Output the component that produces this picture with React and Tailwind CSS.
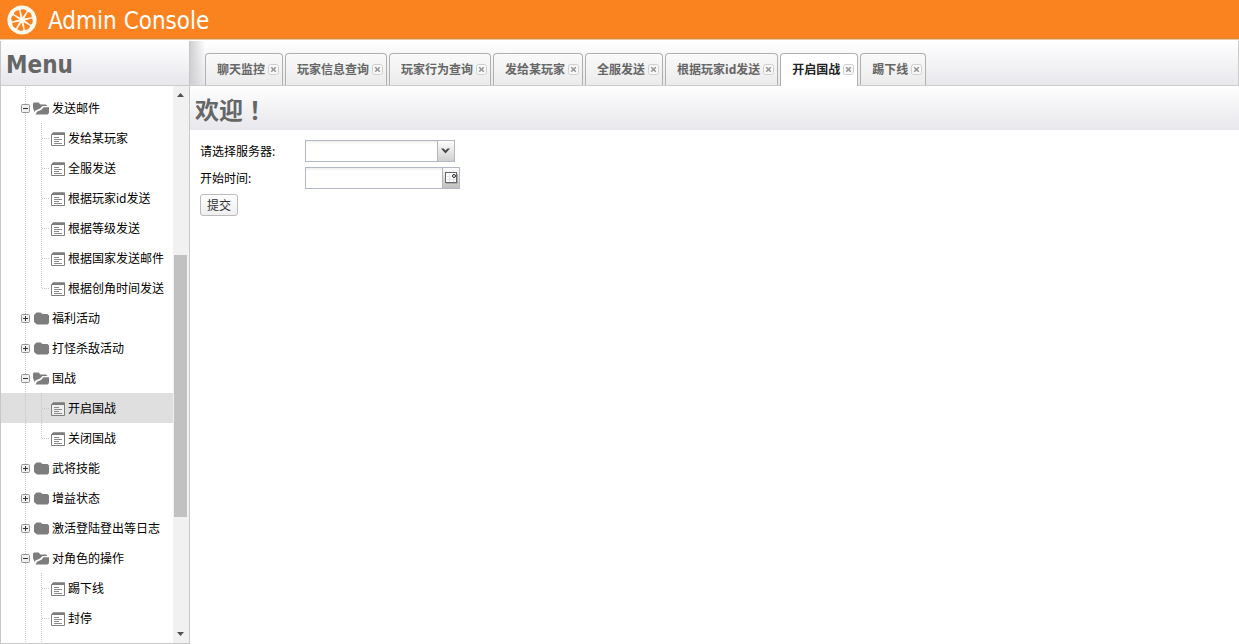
import React, { useState } from "react";

const TREE = [
  {
    label: "发送邮件",
    open: true,
    children: ["发给某玩家", "全服发送", "根据玩家id发送", "根据等级发送", "根据国家发送邮件", "根据创角时间发送"],
  },
  { label: "福利活动" },
  { label: "打怪杀敌活动" },
  { label: "国战", open: true, children: ["开启国战", "关闭国战"] },
  { label: "武将技能" },
  { label: "增益状态" },
  { label: "激活登陆登出等日志" },
  { label: "对角色的操作", open: true, more: true, children: ["踢下线", "封停"] },
];

const TABS = ["聊天监控", "玩家信息查询", "玩家行为查询", "发给某玩家", "全服发送", "根据玩家id发送", "开启国战", "踢下线"];

function OrangeLogo() {
  return (
    <svg width="30" height="30" viewBox="-15 -15 30 30" aria-hidden="true" className="shrink-0">
      <circle r="14.6" fill="#fffaf0" />
      <g fill="#fb831f">
        {[10, 55, 100, 145, 190, 235, 280, 325].map((a) => (
          <path key={a} d="M0 -2.8 L-3.2 -9.4 Q-3 -10.6 0 -10.9 Q3 -10.6 3.2 -9.4 Z" transform={`rotate(${a})`} />
        ))}
      </g>
    </svg>
  );
}

function Dots({ d }) {
  return <path d={d} stroke="#c8c8c8" strokeDasharray="1 1" fill="none" />;
}

function Toggle({ open }) {
  return (
    <svg width="9" height="30" viewBox="0 0 9 30" className="block" aria-hidden="true">
      <Dots d="M4.5 0V30" />
      <rect x="0.5" y="11.5" width="8" height="8" rx="1" fill="#f0f0f0" stroke="#959595" />
      <path d={open ? "M2 15.5H7" : "M2 15.5H7M4.5 13V18"} stroke="#333" />
    </svg>
  );
}

function Folder({ open }) {
  return (
    <svg width="16" height="13" viewBox="0 0 16 13" className="ml-[3px] block" aria-hidden="true">
      {open ? (
        <g fill="#7d7d7d">
          <path d="M1 .5H5.5L7.5 2.5H13L14.5 4H9.5L7 6.5L2.5 8.5L1.5 10L0 6V1.5Z" />
          <path d="M2.5 12.5L4 9.8L8.5 7.8L10.5 5.2H16V11L14.5 12.5Z" />
        </g>
      ) : (
        <path d="M3.5 .5H7.5L9.5 2H14.5L16 3.5V11L14.5 12.5H4L1 10V3Z" fill="#7d7d7d" />
      )}
    </svg>
  );
}

function PageIcon() {
  return (
    <svg width="14" height="16" viewBox="0 -2 14 16" className="block" aria-hidden="true">
      <path d="M2 1H13.5V13.5H.5V3Z" fill="#fff" fillOpacity=".5" stroke="#7d7d7d" />
      <path d="M2 .5H14V3H0Z" fill="#7d7d7d" />
      <path d="M3 5.5H8M3 7.5H11M3 9.5H8M3 11.5H11" stroke="#8a8a8a" />
    </svg>
  );
}

function NodeLabel({ children }) {
  return <span className="ml-[3px] pt-[2px] leading-[18px]">{children}</span>;
}

function Leaf({ label, last, selected, onSelect }) {
  return (
    <li>
      <button
        type="button"
        onClick={onSelect}
        className={"flex h-[30px] w-full items-center pl-5 text-left whitespace-nowrap " + (selected ? "bg-[#dfdfdf]" : "")}
      >
        <svg width="30" height="30" viewBox="0 0 30 30" className="block shrink-0" aria-hidden="true">
          <Dots d="M4.5 0V30" />
          <Dots d={last ? "M20.5 0V16" : "M20.5 0V30"} />
          <Dots d="M21 15.5H28" />
        </svg>
        <PageIcon />
        <NodeLabel>{label}</NodeLabel>
      </button>
    </li>
  );
}

function Branch({ node, selected, onSelect }) {
  const [open, setOpen] = useState(!!node.open);
  return (
    <li>
      <button
        type="button"
        aria-expanded={open}
        onClick={() => setOpen(!open)}
        className="flex h-[30px] w-full items-center pl-5 text-left whitespace-nowrap"
      >
        <Toggle open={open} />
        <Folder open={open} />
        <NodeLabel>{node.label}</NodeLabel>
      </button>
      {open && node.children && (
        <ul>
          {node.children.map((c, i) => (
            <Leaf
              key={c}
              label={c}
              last={!node.more && i === node.children.length - 1}
              selected={selected === node.label + c}
              onSelect={() => onSelect(node.label + c)}
            />
          ))}
        </ul>
      )}
    </li>
  );
}

function Sidebar() {
  const [selected, setSelected] = useState("国战开启国战");
  return (
    <aside className="flex w-[190px] shrink-0 flex-col border border-t-0 border-[#c8c8c8]">
      <h2 className="h-[45px] border-b border-[#cccccc] bg-linear-to-b from-white to-[#e7e7ec] pl-[5px] font-['DejaVu_Sans_Condensed','DejaVu_Sans',sans-serif] text-2xl leading-[48px] font-bold text-[#666666]">
        Menu
      </h2>
      <div className="flex min-h-0 grow">
        <nav aria-label="Menu" className="flex min-w-0 grow flex-col overflow-hidden">
          <svg width="29" height="7" viewBox="0 0 29 7" className="block shrink-0" aria-hidden="true">
            <Dots d="M24.5 1V7" />
          </svg>
          <ul>
            {TREE.map((n) => (
              <Branch key={n.label} node={n} selected={selected} onSelect={setSelected} />
            ))}
          </ul>
          <svg width="45" height="9" viewBox="0 0 45 9" className="block shrink-0" aria-hidden="true">
            <Dots d="M24.5 0V9" />
            <Dots d="M40.5 0V9" />
          </svg>
        </nav>
        <div className="flex w-4 flex-col items-center bg-[#f1f1f1] pr-px" aria-hidden="true">
          <svg width="7" height="18" viewBox="0 0 7 18">
            <path d="M0 11L3.5 7L7 11Z" fill="#505050" />
          </svg>
          <div className="grow-[151] basis-0" />
          <div className="w-[13px] grow-[262] basis-0 bg-[#c1c1c1]" />
          <div className="grow-[108] basis-0" />
          <svg width="7" height="18" viewBox="0 0 7 18">
            <path d="M0 7H7L3.5 11Z" fill="#505050" />
          </svg>
        </div>
      </div>
    </aside>
  );
}

function Tab({ label, active, onSelect }) {
  return (
    <li
      className={
        "flex shrink-0 items-center rounded-t-[4px] border border-b-0 border-[#b0b0b0] pr-[3px] pl-[11px] " +
        (active
          ? "h-[33px] bg-white pb-px text-[#222222]"
          : "h-8 bg-linear-to-b from-[#fafafa] to-[#ebebeb] text-[#666666]")
      }
    >
      <button type="button" role="tab" aria-selected={active} onClick={onSelect} className="font-bold whitespace-nowrap">
        {label}
      </button>
      <button type="button" aria-label={"关闭 " + label} className="ml-[3px]">
        <svg width="11" height="11" viewBox="0 0 11 11" className="block" aria-hidden="true">
          <rect x=".5" y=".5" width="10" height="10" rx="2" fill="#f8f8f8" stroke="#cfcfcf" />
          <path d="M3.2 3.2L7.8 7.8M7.8 3.2L3.2 7.8" stroke="#969696" strokeWidth="1.6" />
        </svg>
      </button>
    </li>
  );
}

function Content() {
  const [active, setActive] = useState("开启国战");
  return (
    <main className="flex min-w-0 grow flex-col">
      <div className="flex h-[45px] items-stretch bg-linear-to-b from-white to-[#e7e7ec]">
        <div className="w-[15px] shrink-0 border-b border-[#cccccc] bg-linear-to-r from-[#cfcfd2] to-transparent" />
        <ul role="tablist" className="flex gap-[2px] bg-[linear-gradient(#cccccc,#cccccc)] bg-[length:100%_1px] bg-bottom bg-no-repeat pt-3">
          {TABS.map((t) => (
            <Tab key={t} label={t} active={t === active} onSelect={() => setActive(t)} />
          ))}
        </ul>
        <div className="grow border-r border-b border-[#cccccc]" />
      </div>
      <h1 className="h-11 bg-linear-to-b from-white to-[#e7e7ec] pl-[5px] text-2xl leading-[46px] font-bold text-[#666666]">
        欢迎<span className="font-['Noto_Sans_CJK_TC',sans-serif]">！</span>
      </h1>
      <form className="flex flex-col items-start gap-[5px] px-[10px] pt-[10px]" onSubmit={(e) => e.preventDefault()}>
        <div className="flex items-center">
          <label htmlFor="server" className="w-[105px] pt-[2px]">
            请选择服务器:
          </label>
          <div className="flex h-[22px] w-[150px] border border-[#b3b8c4] bg-linear-to-b from-[#eeeeee] to-white to-15%">
            <select id="server" className="min-w-0 grow appearance-none bg-transparent px-1 outline-none">
              <option value=""></option>
            </select>
            <button
              type="button"
              aria-label="展开"
              className="flex w-[17px] shrink-0 items-center justify-center border-l border-[#b5b5b5] bg-linear-to-b from-[#fdfdfd] to-[#cfcfcf]"
            >
              <svg width="10" height="6" viewBox="0 0 10 6" aria-hidden="true">
                <path d="M0 .5H2.5L4.5 2.5L6.5 .5H9L4.5 5.5Z" fill="#444" />
              </svg>
            </button>
          </div>
        </div>
        <div className="flex items-center">
          <label htmlFor="start" className="w-[105px] pt-[2px]">
            开始时间:
          </label>
          <div className="flex h-[22px] w-[155px] border border-[#b3b8c4] bg-linear-to-b from-[#eeeeee] to-white to-15%">
            <input id="start" type="text" className="min-w-0 grow bg-transparent px-1 outline-none" />
            <button
              type="button"
              aria-label="选择日期"
              className="flex w-[17px] shrink-0 items-center justify-center border-l border-[#b5b5b5] bg-linear-to-b from-[#fdfdfd] to-[#bfbfbf]"
            >
              <svg width="13" height="12" viewBox="0 0 13 12" aria-hidden="true" className="mb-px shrink-0">
                <rect x=".5" y=".5" width="11" height="10" fill="#fff" stroke="#666" />
                <path d="M4.5 2V10M8.5 7V10M2 4.5H6M2 7.5H11" stroke="#e2e2e2" />
                <path d="M1 11.5H12.5V2" stroke="#aaa" fill="none" />
                <circle cx="9" cy="4" r="1.5" fill="#fff" stroke="#222" />
              </svg>
            </button>
          </div>
        </div>
        <button
          type="submit"
          className="h-[22px] rounded-[3px] border border-[#bbbbbb] bg-linear-to-b from-[#fefefe] to-[#efefef] px-[6px] pt-px leading-[20px] text-[#333333]"
        >
          提交
        </button>
      </form>
    </main>
  );
}

export default function App() {
  return (
    <div className="flex h-screen flex-col bg-white font-['Noto_Sans','Noto_Sans_CJK_SC',sans-serif] text-xs text-black">
      <header className="flex h-10 shrink-0 items-center gap-[11px] border-b border-[#f3c6a0] bg-[#fb831f] pl-[7px] shadow-[inset_0_-1px_0_#d98a3c]">
        <OrangeLogo />
        <span className="pt-[2px] font-['DejaVu_Sans_Condensed','DejaVu_Sans',sans-serif] text-2xl text-white">Admin Console</span>
      </header>
      <div className="flex min-h-0 grow pt-px">
        <Sidebar />
        <Content />
      </div>
    </div>
  );
}
